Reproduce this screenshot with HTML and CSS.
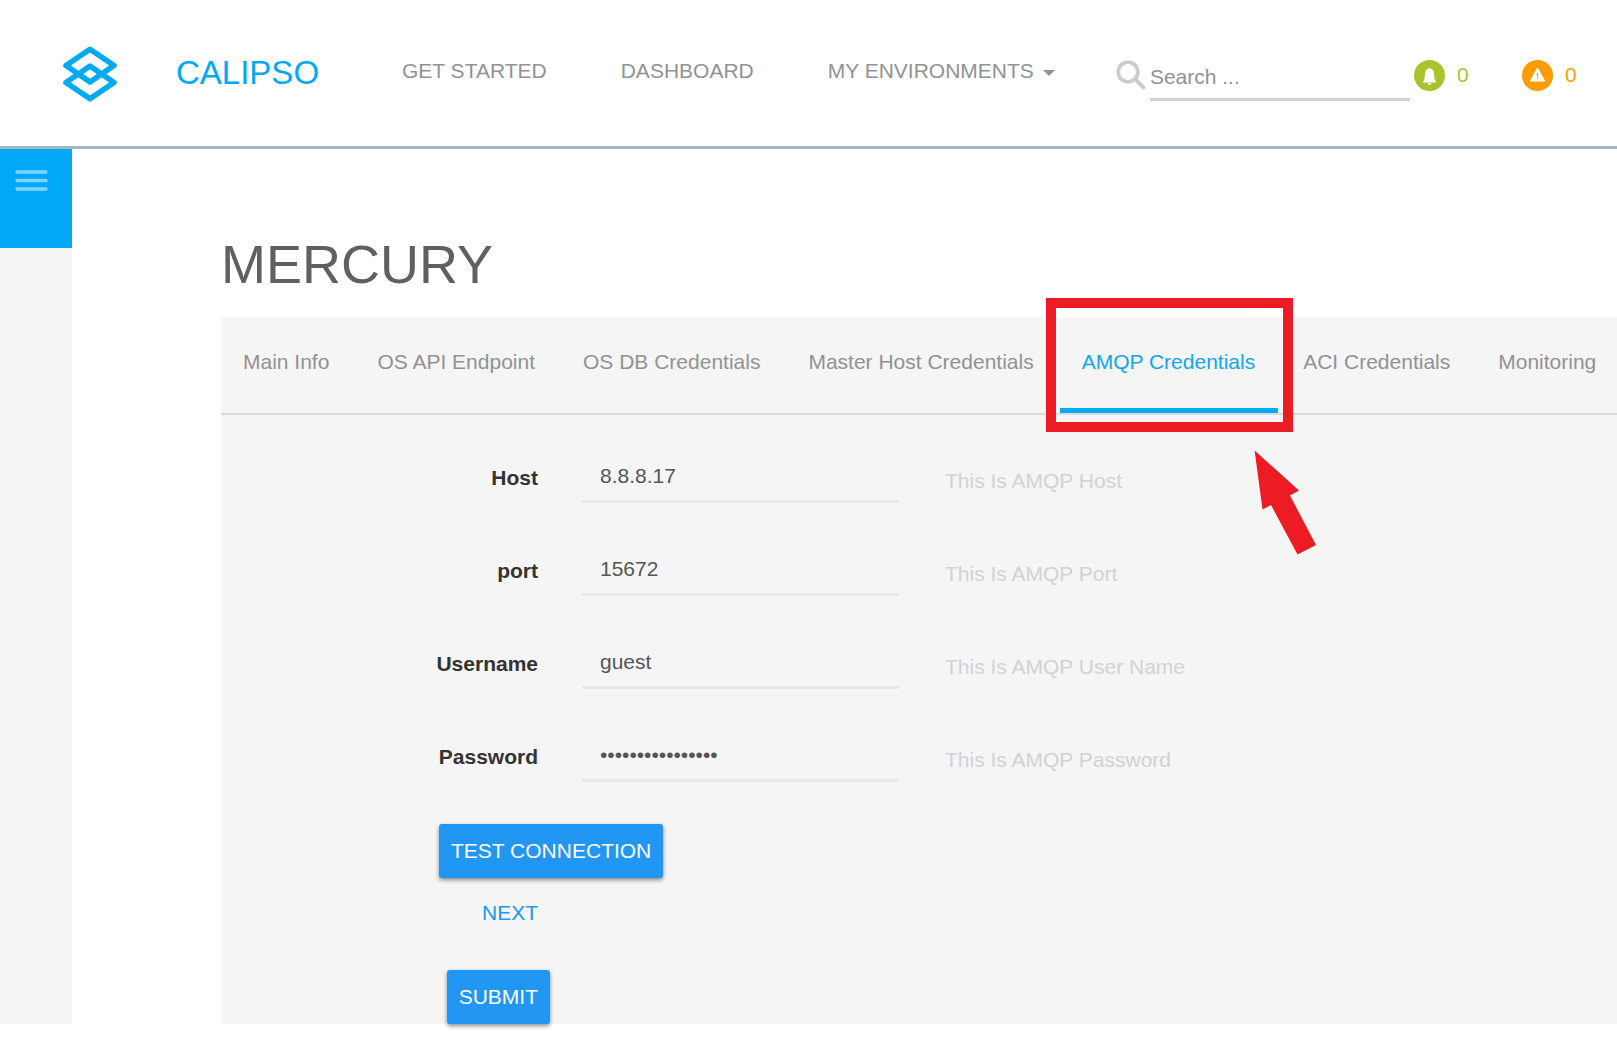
FILE: index.html
```html
<!DOCTYPE html>
<html lang="en">
<head>
<meta charset="utf-8">
<title>Calipso - Mercury</title>
<link rel="stylesheet" href="styles.css">
</head>
<body>
<header class="topbar">
  <a class="logo" href="#" aria-label="Calipso home">
    <svg width="54" height="56" viewBox="0 0 54 56" fill="none" stroke="#00aaf3" stroke-width="5.600" stroke-linejoin="round">
      <path d="M27 3.300 51 19.500 27 36 3 19.500Z"/>
      <path d="M27 20 51 36.500 27 52.700 3 36.500Z"/>
    </svg>
  </a>
  <a class="brand" href="#">CALIPSO</a>
  <nav class="menu">
    <a href="#">GET STARTED</a>
    <a href="#">DASHBOARD</a>
    <a href="#">MY ENVIRONMENTS<span class="caret"></span></a>
  </nav>
  <div class="search">
    <svg width="30" height="30" viewBox="0 0 30 30" fill="none" stroke="#ccc" stroke-linecap="round">
      <circle cx="12" cy="12" r="9.800" stroke-width="3.800"/>
      <path d="M19.500 19.500 27.500 27.500" stroke-width="4"/>
    </svg>
    <input type="text" placeholder="Search ..." aria-label="Search">
  </div>
  <a class="counter counter-info" href="#">
    <svg width="31" height="31" viewBox="0 0 31 31">
      <circle cx="15.500" cy="15.500" r="15.500" fill="#a9c32c"/>
      <path fill="#fff" d="M14.500 8.600a1.100 1.100 0 0 1 2 0c2.400.7 3.600 2.600 3.600 5.400 0 4 .4 5.600 1.700 7.600v.9H9.200v-.9c1.300-2 1.700-3.600 1.700-7.600 0-2.800 1.200-4.700 3.600-5.400ZM13.700 23.300h3.600c0 2-3.600 2-3.600 0Z"/>
    </svg>
    0
  </a>
  <a class="counter counter-warn" href="#">
    <svg width="31" height="31" viewBox="0 0 31 31">
      <circle cx="15.500" cy="15.500" r="15.500" fill="#fb9d00"/>
      <path fill="#fff" stroke="#fff" stroke-width="1" stroke-linejoin="round" d="M15.500 8 22.700 21H8.300Z"/>
      <path stroke="#fb9d00" stroke-width="1.400" d="M15.500 13v3.700M15.500 17.800v1.400"/>
    </svg>
    0
  </a>
</header>
<div class="page">
  <aside class="sidebar">
    <button class="toggle" type="button" aria-label="Toggle menu">
      <svg width="33" height="21" viewBox="0 0 33 21" stroke="#7fd3fb" stroke-width="3.400" stroke-linecap="round">
        <path d="M2 2H31M2 10.500H31M2 19H31"/>
      </svg>
    </button>
  </aside>
  <main class="content">
    <h1>MERCURY</h1>
    <section class="panel">
      <nav class="tabs">
        <a href="#">Main Info</a>
        <a href="#">OS API Endpoint</a>
        <a href="#">OS DB Credentials</a>
        <a href="#">Master Host Credentials</a>
        <a class="active" href="#">AMQP Credentials
          <span class="highlight"></span>
          <svg class="arrow" width="62" height="105" viewBox="0 0 62 105"><path fill="#ed1c24" d="M.6.500 45 40.500 36 45.500 62 95 43.500 104.500 17 55 8.500 59.500Z"/></svg>
        </a>
        <a href="#">ACI Credentials</a>
        <a href="#">Monitoring</a>
      </nav>
      <form class="form">
        <div class="row">
          <label for="host">Host</label>
          <input id="host" type="text" value="8.8.8.17">
          <p>This Is AMQP Host</p>
        </div>
        <div class="row">
          <label for="port">port</label>
          <input id="port" type="text" value="15672">
          <p>This Is AMQP Port</p>
        </div>
        <div class="row">
          <label for="user">Username</label>
          <input id="user" type="text" value="guest">
          <p>This Is AMQP User Name</p>
        </div>
        <div class="row">
          <label for="pass">Password</label>
          <input id="pass" type="password" value="calipso_default1">
          <p>This Is AMQP Password</p>
        </div>
        <div class="actions">
          <button class="btn test" type="button">TEST CONNECTION</button>
          <button class="next" type="button">NEXT</button>
          <button class="btn submit" type="submit">SUBMIT</button>
        </div>
      </form>
    </section>
  </main>
</div>
</body>
</html>
```

FILE: styles.css
```css
* {
  box-sizing: border-box;
}

body {
  margin: 0;
  padding-bottom: 16px;
  overflow-x: hidden;
  background: #fff;
  font: 21px/24px "Liberation Sans", Arial, sans-serif;
  color: #929292;
}

a {
  color: inherit;
  text-decoration: none;
}

svg {
  display: block;
  flex: none;
}

button,
input {
  font: inherit;
  border: 0;
  background: none;
  border-radius: 0;
  outline: 0;
}

/* Top bar */
.topbar {
  display: flex;
  align-items: center;
  height: 149px;
  padding: 4px 0 0 63px;
  border-bottom: 3px solid #a3b8c0;
  white-space: nowrap;
}

.logo {
  padding-bottom: 2px;
}

.brand {
  flex: none;
  width: 226px;
  margin-left: 59px;
  padding-bottom: 4px;
  font-size: 33px;
  line-height: 36px;
  color: #00aaf3;
}

.menu {
  display: flex;
  flex: none;
  gap: 74px;
  padding-bottom: 8px;
}

.menu a {
  display: flex;
  align-items: center;
}

.caret {
  margin-left: 9px;
  margin-top: 4px;
  border: 6px solid transparent;
  border-top-color: #929292;
  border-bottom: 0;
}

.search {
  display: flex;
  flex: 1;
  align-items: center;
  min-width: 0;
  gap: 4px;
  margin-left: 61px;
}

.search input {
  flex: 1;
  min-width: 0;
  height: 52px;
  padding: 6px 0 0;
  border-bottom: 3px solid #d1d1d1;
}

.search input::placeholder {
  color: #929292;
  opacity: 1;
}

.counter {
  display: flex;
  flex: none;
  align-items: center;
  gap: 12px;
  width: 108px;
  margin-left: 4px;
}

.counter-info {
  color: #a9c32c;
}

.counter-warn {
  width: 95px;
  margin-left: 0;
  color: #fb9d00;
}

/* Page body */
.page {
  display: flex;
}

.sidebar {
  flex: none;
  width: 72px;
  background: #f5f5f5;
}

.toggle {
  display: flex;
  width: 100%;
  height: 99px;
  padding: 21px 15px;
  background: #00a8f5;
}

.content {
  flex: 1;
  min-width: 0;
  padding: 83px 0 0 149px;
}

h1 {
  margin: 0 0 21px;
  font-size: 54px;
  font-weight: 400;
  line-height: 64px;
  color: #606060;
}

.panel {
  background: #f5f5f5;
}

.tabs {
  display: flex;
  gap: 3px;
  height: 98px;
  border-bottom: 2px solid #dcdcdc;
  white-space: nowrap;
}

.tabs a {
  position: relative;
  flex: none;
  padding: 33px 23px 0 22px;
}

.tabs .active {
  border-bottom: 5px solid #00aaf5;
  color: #13a5f0;
}

/* Callout over the active tab */
.highlight {
  position: absolute;
  inset: -19px -15px -24px -14px;
  border: 10px solid #ed1c24;
}

.arrow {
  position: absolute;
  top: 133px;
  left: 194px;
}

/* Credentials form */
.form {
  display: flex;
  flex-direction: column;
  gap: 42px;
  padding-top: 37px;
}

.row {
  display: grid;
  grid-template-columns: 317px 317px 1fr;
  column-gap: 44px;
  height: 51px;
}

.row label {
  padding-top: 14px;
  font-weight: 700;
  text-align: right;
  color: #333;
}

.row input {
  width: 100%;
  padding: 0 18px;
  border-bottom: 3px solid #e6e6eb;
  color: #555;
}

.row p {
  margin: 0;
  padding: 17px 0 0 2px;
  color: #d2d2d3;
}

.actions {
  display: flex;
  flex-direction: column;
  align-items: flex-end;
  width: 329px;
}

.btn {
  position: relative;
  height: 54px;
  padding: 0 12px;
  border-radius: 3px;
  background: #2196f3;
  box-shadow: 0 2px 4px rgba(0, 0, 0, 0.45);
  color: #fff;
  white-space: nowrap;
}

.test {
  align-self: flex-start;
  margin-left: 218px;
}

.next {
  margin: 23px 0 45px;
  padding: 0 12px;
  color: #2196f3;
}
```
